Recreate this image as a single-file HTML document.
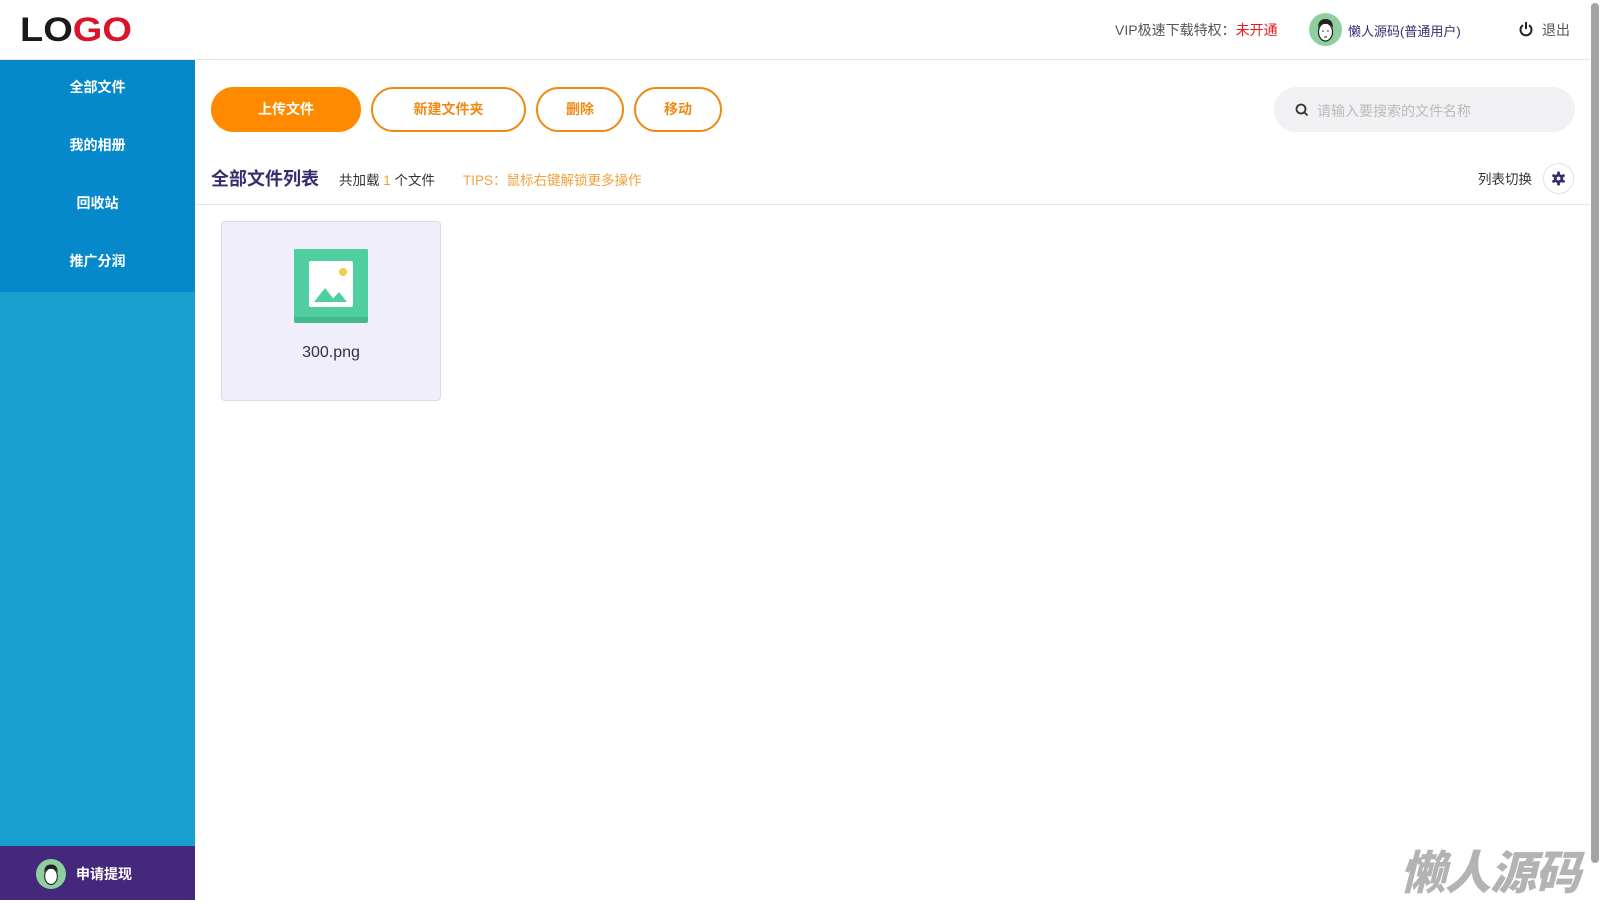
<!DOCTYPE html>
<html><head><meta charset="utf-8"><style>
*{margin:0;padding:0;box-sizing:border-box}
body{width:1600px;height:900px;overflow:hidden;background:#fff;font-family:"Liberation Sans","Noto Sans CJK SC",sans-serif;position:relative;color:#333}
.abs{position:absolute}
.hdr{left:0;top:0;width:1590px;height:60px;border-bottom:1px solid #e6e6e6;background:#fff}
.logo{left:20px;top:9px;font-size:38px;font-weight:900;letter-spacing:0px;font-family:"Liberation Sans",sans-serif;line-height:42px;transform:scaleY(0.9);transform-origin:left center}
.side{left:0;top:60px;width:195px;height:840px;background:#17a0ce}
.nav{left:0;top:60px;width:195px;height:232px;background:#0689cb}
.nav div{height:58px;line-height:54px;text-align:center;color:#fff;font-weight:bold;font-size:14px}
.bot{left:0;top:846px;width:195px;height:54px;background:#43287b}
.av{border-radius:50%;background:#8fcf9f;overflow:hidden}
.btn{top:87px;height:45px;border-radius:23px;border:2px solid #f08a14;color:#f08a14;font-weight:bold;font-size:14px;text-align:center;line-height:41px}
.line{left:195px;top:204px;width:1395px;height:1px;background:#e6e6e6}
.sb{left:1591px;top:3px;width:8px;height:860px;background:#a3a3a3;border-radius:4px}
</style></head><body>
<div class="abs hdr"></div>
<div class="abs logo"><span style="color:#1a1a1a">LO</span><span style="color:#d9142b">GO</span></div>
<div class="abs" style="left:1115px;top:20px;font-size:14px;color:#555">VIP极速下载特权：<span style="color:#e0201e">未开通</span></div>
<div class="abs av" style="left:1309px;top:13px;width:33px;height:33px">
<svg width="33" height="33" viewBox="0 0 33 33"><ellipse cx="16.5" cy="19" rx="7" ry="9" fill="#fff" stroke="#222" stroke-width="1.2"/><path d="M9 15 Q9 6 16.5 6 Q24 6 24 15 Q22 10 16.5 11 Q11 10 9 15Z" fill="#222"/><circle cx="14" cy="18" r="0.8" fill="#222"/><circle cx="19" cy="18" r="0.8" fill="#222"/><path d="M15 24 H18" stroke="#222"/></svg></div>
<div class="abs" style="left:1348px;top:21px;font-size:13px;color:#3a2a6e">懒人源码(普通用户)</div>
<svg class="abs" style="left:1518px;top:21px" width="16" height="16" viewBox="0 0 16 16"><path d="M5 4.2A5.5 5.5 0 1 0 11 4.2" fill="none" stroke="#222" stroke-width="2"/><path d="M8 1V8" stroke="#222" stroke-width="2"/></svg>
<div class="abs" style="left:1542px;top:20px;font-size:14px;color:#555">退出</div>

<div class="abs side"></div>
<div class="abs nav"><div>全部文件</div><div>我的相册</div><div>回收站</div><div>推广分润</div></div>
<div class="abs bot"></div>
<div class="abs av" style="left:36px;top:859px;width:30px;height:30px">
<svg width="30" height="30" viewBox="0 0 33 33"><ellipse cx="16.5" cy="19" rx="7" ry="9" fill="#fff" stroke="#222" stroke-width="1.2"/><path d="M9 15 Q9 6 16.5 6 Q24 6 24 15 Q22 10 16.5 11 Q11 10 9 15Z" fill="#222"/></svg></div>
<div class="abs" style="left:76px;top:864px;color:#fff;font-weight:bold;font-size:14px">申请提现</div>

<div class="abs btn" style="left:211px;width:150px;background:#ff8a00;border-color:#ff8a00;color:#fff">上传文件</div>
<div class="abs btn" style="left:371px;width:155px">新建文件夹</div>
<div class="abs btn" style="left:536px;width:88px">删除</div>
<div class="abs btn" style="left:634px;width:88px">移动</div>
<div class="abs" style="left:1274px;top:87px;width:301px;height:45px;border-radius:23px;background:#f1f1f4"></div>
<svg class="abs" style="left:1295px;top:103px" width="14" height="14" viewBox="0 0 14 14"><circle cx="6" cy="6" r="4.5" fill="none" stroke="#333" stroke-width="1.8"/><path d="M9.3 9.3L12.5 12.5" stroke="#333" stroke-width="1.8"/></svg>
<div class="abs" style="left:1317px;top:101px;font-size:14px;color:#bbb">请输入要搜索的文件名称</div>

<div class="abs" style="left:211px;top:165px;font-size:18px;font-weight:bold;color:#3a2a6e">全部文件列表</div>
<div class="abs" style="left:339px;top:169px;font-size:13.5px;color:#333">共加载 <span style="color:#f0a030">1</span> 个文件</div>
<div class="abs" style="left:463px;top:169px;font-size:13.5px;color:#f0a040">TIPS：鼠标右键解锁更多操作</div>
<div class="abs" style="left:1478px;top:168px;font-size:13.5px;color:#333">列表切换</div>
<div class="abs" style="left:1543px;top:163px;width:31px;height:31px;border-radius:50%;border:1px solid #e2e2e2;background:#fff"></div>
<svg class="abs" style="left:1551px;top:171px" width="15" height="15" viewBox="0 0 16 16"><g fill="#3a2a6e"><circle cx="8" cy="8" r="5"/><rect x="6.5" y="0.5" width="3" height="15" rx="1"/><rect x="6.5" y="0.5" width="3" height="15" rx="1" transform="rotate(60 8 8)"/><rect x="6.5" y="0.5" width="3" height="15" rx="1" transform="rotate(120 8 8)"/></g><circle cx="8" cy="8" r="2" fill="#fff"/></svg>
<div class="abs line"></div>

<div class="abs" style="left:221px;top:221px;width:220px;height:180px;background:#f1eefb;border:1px solid #dcdae4;border-radius:4px"></div>
<svg class="abs" style="left:294px;top:249px" width="74" height="74" viewBox="0 0 74 74"><rect width="74" height="74" rx="2" fill="#44b98d"/><rect width="74" height="68" rx="2" fill="#4fcf9f"/><rect x="15" y="12" width="44" height="46" rx="2" fill="#fff"/><circle cx="49" cy="23" r="4" fill="#f7c948"/><path d="M20 53 L31 39 L42 53Z" fill="#4fcf9f"/><path d="M36 53 L45 43 L53 53Z" fill="#4fcf9f"/></svg>
<div class="abs" style="left:221px;width:220px;top:344px;text-align:center;font-size:16px;color:#333">300.png</div>

<div class="abs sb"></div>
<div class="abs" style="left:1400px;top:837px;font-size:46px;font-weight:900;font-style:italic;color:#b3b3b3;letter-spacing:-1px">懒人源码</div>
</body></html>
